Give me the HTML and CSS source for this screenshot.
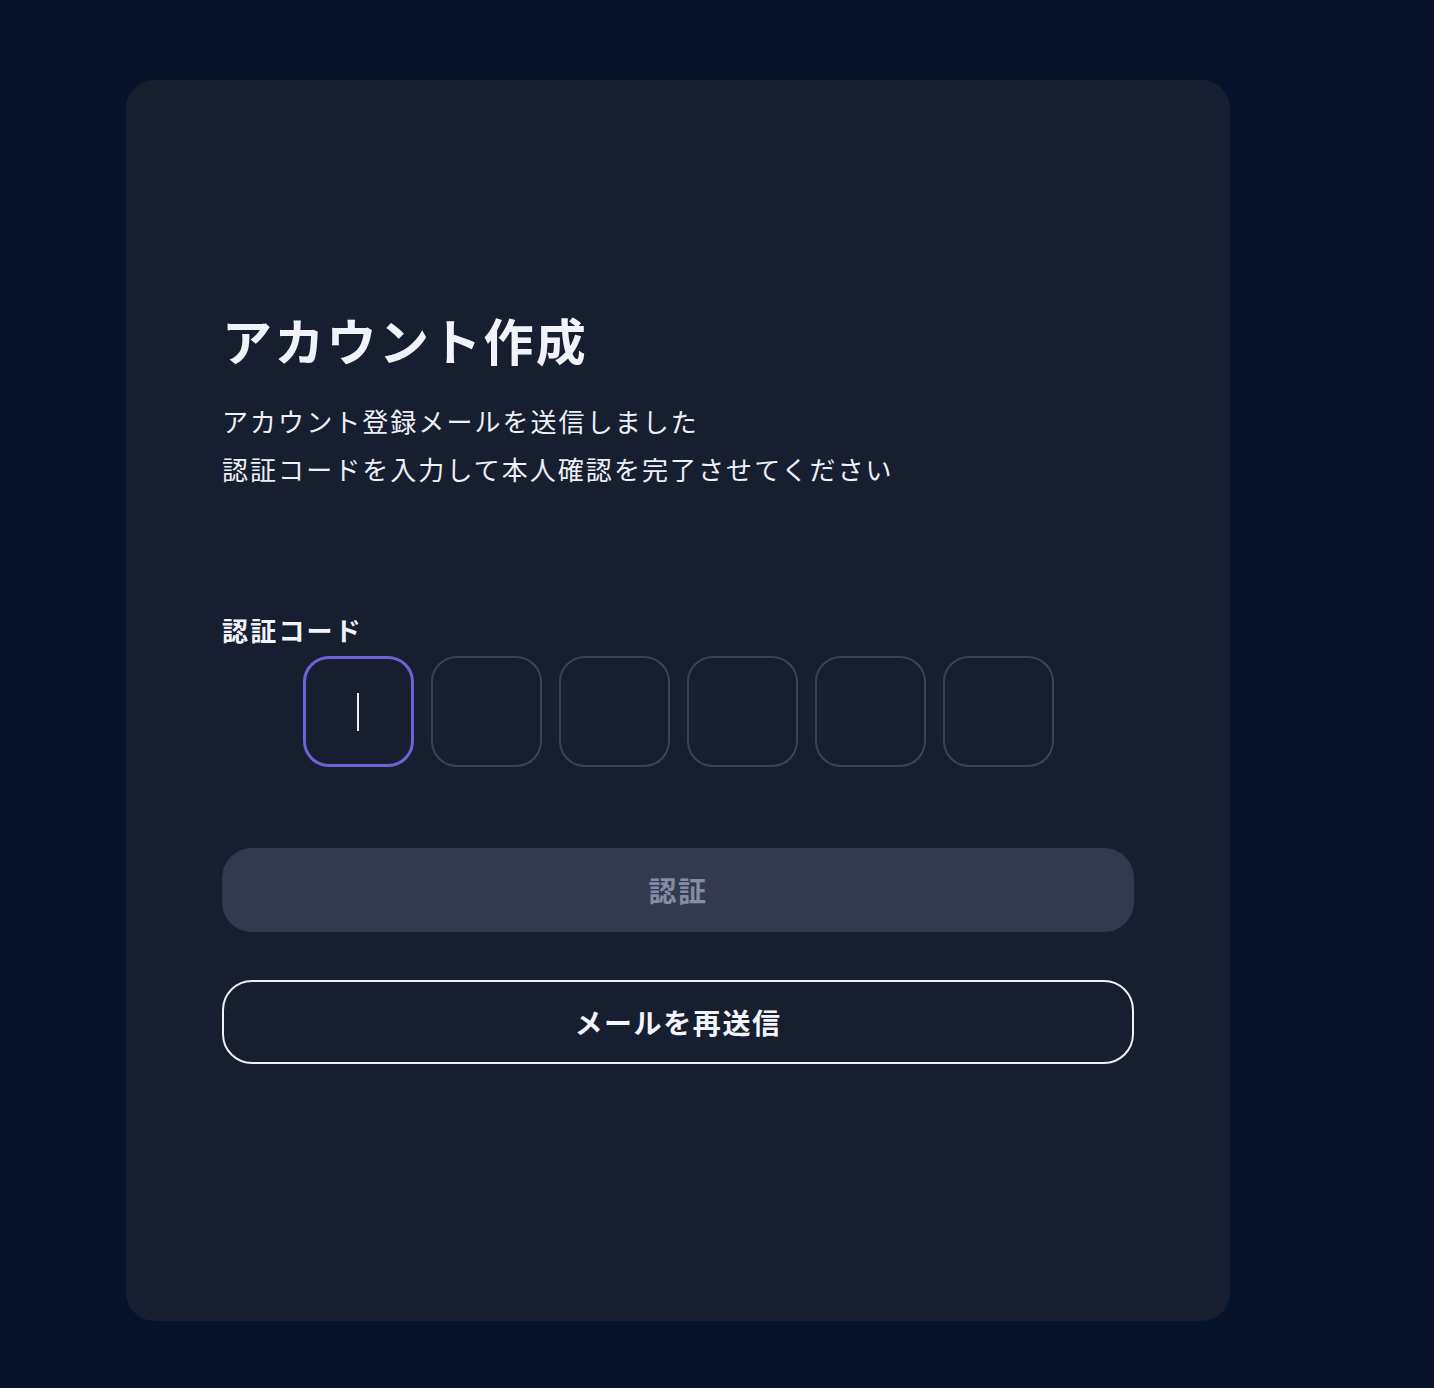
FILE: index.html
```html
<!DOCTYPE html>
<html lang="ja">
<head>
<meta charset="utf-8">
<title>アカウント作成</title>
<link rel="stylesheet" href="styles.css">
</head>
<body>
<main class="page">
  <section class="card">
    <h1 class="title">アカウント作成</h1>
    <p class="lead">アカウント登録メールを送信しました<br>認証コードを入力して本人確認を完了させてください</p>
    <div class="label">認証コード</div>
    <div class="code-row">
      <div class="code-box focused"><span class="caret"></span></div>
      <div class="code-box"></div>
      <div class="code-box"></div>
      <div class="code-box"></div>
      <div class="code-box"></div>
      <div class="code-box"></div>
    </div>
    <button class="btn btn-verify" type="button" disabled>認証</button>
    <button class="btn btn-resend" type="button">メールを再送信</button>
  </section>
</main>
</body>
</html>
```

FILE: styles.css
```css
html, body {
  margin: 0;
  padding: 0;
  background: #06132b;
}
body {
  font-family: "Noto Sans CJK JP", "Noto Sans", sans-serif;
  color: #f1f2f8;
}
.page {
  padding: 80px 204px 67px 126px;
}
.card {
  background: #161e30;
  border-radius: 28px;
  padding: 229px 96px 257px 96px;
  display: flex;
  flex-direction: column;
}
.title {
  margin: 0;
  font-size: 50px;
  line-height: 60px;
  font-weight: 700;
  letter-spacing: 2.3px;
  color: #f2f3f9;
}
.lead {
  margin: 28px 0 0 0;
  font-size: 26px;
  line-height: 48px;
  letter-spacing: 2.05px;
  font-weight: 400;
  color: #eef0f6;
}
.label {
  margin-top: 121px;
  font-size: 26px;
  line-height: 32px;
  font-weight: 700;
  letter-spacing: 2.2px;
  color: #f2f3f8;
}
.code-row {
  margin-top: 10px;
  display: flex;
  justify-content: center;
  gap: 17px;
}
.code-box {
  box-sizing: border-box;
  width: 111px;
  height: 111px;
  border: 2px solid #3c4356;
  border-radius: 26px;
  display: flex;
  align-items: center;
  justify-content: center;
}
.code-box.focused {
  border: 3px solid #6f62d6;
}
.caret {
  display: block;
  width: 2px;
  height: 38px;
  background: #f0f1f6;
}
.btn {
  box-sizing: border-box;
  width: 100%;
  height: 84px;
  border-radius: 30px;
  font-family: "Noto Sans CJK JP", "Noto Sans", sans-serif;
  font-size: 28px;
  font-weight: 700;
  letter-spacing: 1.6px;
  cursor: pointer;
}
.btn-verify {
  margin-top: 81px;
  background: #343a4e;
  border: none;
  color: #878ca6;
}
.btn-resend {
  margin-top: 48px;
  background: transparent;
  border: 2px solid #eef0f5;
  color: #f4f5fa;
}
```
